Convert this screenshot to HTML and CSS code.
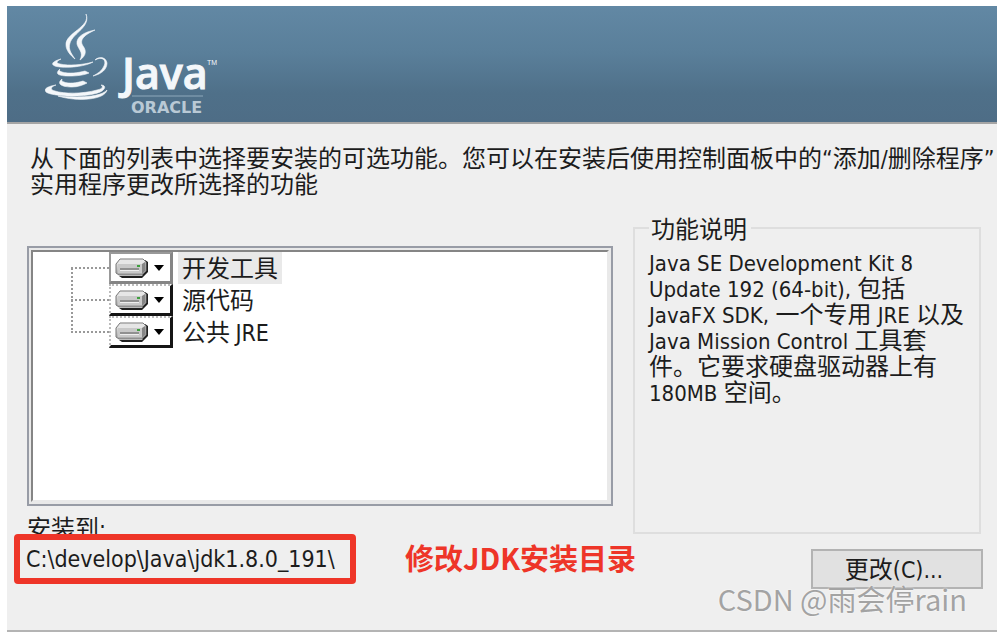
FILE: index.html
```html
<!DOCTYPE html>
<html lang="zh-CN">
<head>
<meta charset="utf-8">
<title>Java SE Development Kit</title>
<link rel="stylesheet" href="styles.css">
</head>
<body>
<svg class="symbols" aria-hidden="true">
  <defs>
    <linearGradient id="metal" x1="0" y1="0" x2="0" y2="1">
      <stop offset="0" stop-color="#f2f2f2"/>
      <stop offset="1" stop-color="#a6a6a6"/>
    </linearGradient>
  </defs>
  <symbol id="drive" viewBox="0 0 34 20">
    <path d="M4 18 L7 20 H27 L33 14 V4 L30 2 V13 L27 18Z" fill="#202020"/>
    <path d="M5 1 H28 L31 4 V13 L27 17 H4 L1 15 V6Z" fill="url(#metal)" stroke="#777" stroke-width="1"/>
    <path d="M3 6 H27 V15 H3Z" fill="#c9c9c9"/>
    <path d="M6 2 H27 L29 4 L27 6 H3Z" fill="#e6e6e6"/>
    <path d="M27 6 L30 4 V13 L27 16Z" fill="#858585"/>
    <path d="M5 11 H24" stroke="#777" stroke-width="1.4"/>
    <path d="M5 12.5 H24" stroke="#eee" stroke-width="1"/>
    <path d="M22 8 H25" stroke="#3fa03f" stroke-width="2"/>
  </symbol>
</svg>
<div class="dialog">
  <header class="banner">
    <svg class="logo" viewBox="0 0 180 110" role="img" aria-label="Java Oracle">
      <g fill="#f4f7fa" stroke="#f4f7fa" stroke-width="0.6">
        <path d="M41 8 C46 21 20 27 21 39 C21 44 25 49 30 53 C26 47 23 43 25 37 C28 27 46 21 41 8Z"/>
        <path d="M50 24 C39 26 31 31 32 38 C33 43 39 46 35 54 C42 49 41 44 38 40 C34 34 39 29 50 24Z"/>
        <path d="M16 53 C5 56 5 60 15 61 C27 62 41 60 48 56 C37 59 24 60 15 58 C10 57 12 55 16 53Z"/>
        <path d="M50 54 C57 50 62 54 59 60 C57 65 52 68 48 70 C57 68 62 63 62 57 C61 51 54 50 50 54Z"/>
        <path d="M15 63 C9 68 14 70 24 70 C33 70 39 69 44 67 L40 65 C33 67 23 68 17 66 C14 65 14 64 15 63Z"/>
        <path d="M17 73 C11 78 17 81 27 81 C33 81 38 79 42 77 L38 75 C32 77 23 78 19 76 C16 75 17 74 17 73Z"/>
        <path d="M11 79 C-2 81 -3 86 6 88 C24 92 49 90 57 85 C62 81 59 79 56 79 C59 81 57 83 52 84 C38 88 19 88 10 85 C5 84 5 81 11 79Z"/>
        <path d="M13 90 C32 96 60 94 62 84 C56 91 34 92 13 90Z"/>
      </g>
      <text class="logo-name" x="77" y="83">Java</text>
      <text class="logo-tm" x="162" y="59">TM</text>
      <path d="M87 90 H158" stroke="#8fa9bb" stroke-width="1"/>
      <text class="logo-vendor" x="86" y="107">ORACLE</text>
    </svg>
  </header>
  <main class="content">
    <p class="intro">从下面的列表中选择要安装的可选功能。您可以在安装后使用控制面板中的<span class="latin">“</span>添加<span class="latin">/</span>删除程序<span class="latin">”</span><br>实用程序更改所选择的功能</p>
    <div class="columns">
      <section class="left">
        <div class="tree">
          <ul class="features">
            <li class="feature selected">
              <button class="state" type="button" aria-label="开发工具"><svg class="drive"><use href="#drive"/></svg><span class="arrow"></span></button>
              <span class="name">开发工具</span>
            </li>
            <li class="feature">
              <button class="state" type="button" aria-label="源代码"><svg class="drive"><use href="#drive"/></svg><span class="arrow"></span></button>
              <span class="name">源代码</span>
            </li>
            <li class="feature">
              <button class="state" type="button" aria-label="公共 JRE"><svg class="drive"><use href="#drive"/></svg><span class="arrow"></span></button>
              <span class="name">公共 <span class="latin">JRE</span></span>
            </li>
          </ul>
        </div>
        <div class="target-label">安装到<span class="latin">:</span></div>
        <div class="target">
          <div class="path latin">C:\develop\Java\jdk1.8.0_191\</div>
          <strong class="note">修改JDK安装目录</strong>
        </div>
      </section>
      <section class="right">
        <fieldset class="details">
          <legend>功能说明</legend>
          <p><span class="latin">Java SE Development Kit 8</span><br><span class="latin">Update 192 (64-bit), </span>包括<br><span class="latin">JavaFX SDK, </span>一个专用<span class="latin"> JRE </span>以及<br><span class="latin">Java Mission Control </span>工具套<br>件。它要求硬盘驱动器上有<br><span class="latin">180MB </span>空间。</p>
        </fieldset>
        <button class="change" type="button">更改<span class="latin">(C)...</span></button>
      </section>
    </div>
  </main>
  <div class="watermark">CSDN @雨会停rain</div>
</div>
</body>
</html>
```

FILE: styles.css
```css
* {
  box-sizing: border-box;
}

body {
  margin: 0;
  padding: 6px 1px 6px 7px;
  min-height: 100vh;
  display: flex;
  background: #fff;
  color: #1c1c1c;
  font: 24px/26px "Noto Sans CJK SC", sans-serif;
}

p,
ul {
  margin: 0;
  padding: 0;
}

.latin {
  font-family: "DejaVu Sans Condensed", "DejaVu Sans", sans-serif;
  font-size: 23px;
  line-height: 18px;
}

.symbols {
  position: absolute;
  width: 0;
  height: 0;
}

.dialog {
  position: relative;
  flex: 1;
  min-width: 0;
  display: flex;
  flex-direction: column;
  background: #efefef;
  border-bottom: 2px solid #b4b4b4;
}

.banner {
  height: 118px;
  padding-left: 38px;
  background: linear-gradient(#6288a4, #5a7f9a 40%, #4f7089 75%, #4e6d86);
  border-bottom: 2px solid #a5a5a5;
}

.logo {
  display: block;
  width: 180px;
  height: 110px;
}

.logo text {
  fill: #f4f7fa;
}

.logo-name {
  font: 600 43px "Open Sans", sans-serif;
  stroke: #f4f7fa;
  stroke-width: 1px;
}

.logo-tm {
  font: 7px "Liberation Sans", sans-serif;
}

.logo .logo-vendor {
  font: bold 16px "DejaVu Sans", sans-serif;
  fill: #b9c9d5;
}

.content {
  flex: 1;
  display: flex;
  flex-direction: column;
  padding: 20px 16px 41px 20px;
}

.intro {
  padding-left: 3px;
  white-space: nowrap;
}

.columns {
  flex: 1;
  display: grid;
  grid-template-columns: minmax(0, 586fr) minmax(0, 348fr);
  gap: 20px;
  padding-top: 19px;
}

.left,
.right {
  display: flex;
  flex-direction: column;
}

.left {
  padding-top: 31px;
  padding-bottom: 5px;
}

.tree {
  flex: 1;
  padding: 2px;
  border: 2px solid #989ca6;
  background: #e9e9e9;
}

.features {
  height: 100%;
  padding-left: 38px;
  border: 2px solid #858585;
  border-right-color: #e9e9e9;
  border-bottom-color: #e9e9e9;
  background: #fff;
  list-style: none;
}

.feature {
  display: flex;
  align-items: center;
  height: 32px;
}

/* Dotted connector lines to the left of each node */
.feature::before {
  content: "";
  align-self: stretch;
  width: 38px;
  background:
    repeating-linear-gradient(90deg, #999 0 2px, transparent 2px 4px) 0 50% / 100% 2px no-repeat,
    repeating-linear-gradient(#999 0 2px, transparent 2px 4px) 0 0 / 2px 100% no-repeat;
}

.feature:first-child::before {
  background-position: 0 50%, 0 16px;
}

.feature:last-child::before {
  background-size: 100% 2px, 2px 50%;
}

.state {
  display: flex;
  align-items: center;
  gap: 5px;
  width: 64px;
  height: 32px;
  padding: 0 0 0 4px;
  border: 2px dotted #bbb;
  border-right: 3px solid #151515;
  border-bottom: 3px solid #151515;
  background: #fff;
}

.selected .state {
  border: 3px solid #858585;
  border-left: 2px solid #999;
  border-top: 2px solid #999;
}

.drive {
  width: 34px;
  height: 20px;
}

.arrow {
  border: 5px solid transparent;
  border-top: 6px solid #000;
  border-bottom: 0;
}

.name {
  margin-left: 5px;
  padding: 1px 4px 3px;
  line-height: 28px;
}

.selected .name {
  background: #e9e9e9;
}

.target-label {
  margin-top: 8px;
}

.target {
  display: flex;
  align-items: center;
  gap: 49px;
  margin-top: -6px;
  margin-left: -13px;
}

.path {
  flex: none;
  width: 342px;
  padding: 6px;
  border: 6px solid #ee3528;
  border-radius: 4px;
  background: #efefef;
  line-height: 26px;
}

.note {
  color: #ee3528;
  font-size: 29px;
  line-height: 36px;
  padding-bottom: 4px;
  white-space: nowrap;
}

.details {
  flex: 1;
  min-width: 0;
  margin: 0;
  padding: 7px 0 0 14px;
  border: 2px solid #dedede;
}

.details legend {
  padding: 0 4px 0 2px;
}

.details p {
  white-space: nowrap;
}

.details .latin {
  font-size: 22px;
}

.change {
  align-self: flex-end;
  width: 172px;
  height: 40px;
  margin-top: 15px;
  margin-right: -2px;
  padding: 0 6px 2px 0;
  border: 2px solid #b3b3b3;
  background: #e1e1e1;
  color: inherit;
  font: inherit;
}

.watermark {
  position: absolute;
  right: 30px;
  bottom: 14px;
  color: #a3a3a3;
  font: 29px/36px "Noto Sans CJK SC", sans-serif;
  text-shadow: 0 0 2px #fff;
  white-space: nowrap;
}
```
